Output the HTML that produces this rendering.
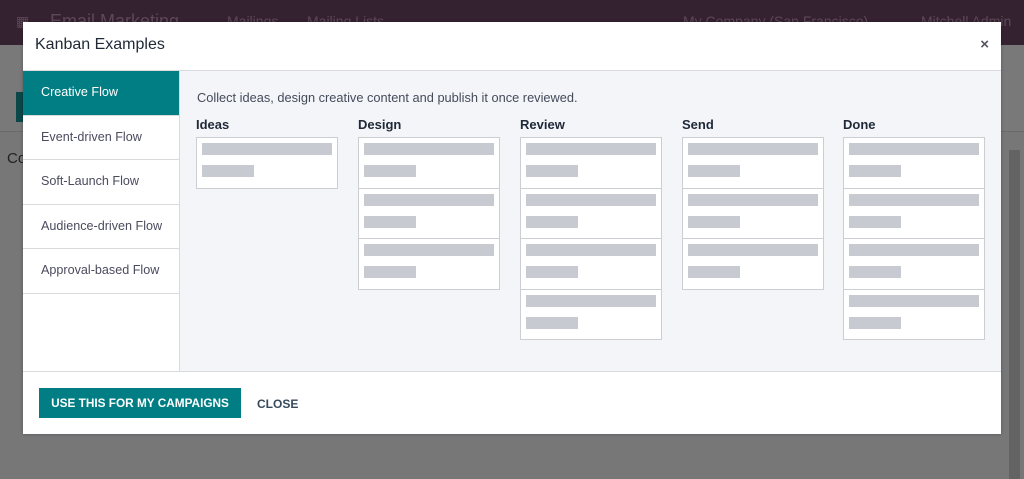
<!DOCTYPE html>
<html><head><style>
*{box-sizing:border-box;margin:0;padding:0}
body{width:1024px;height:479px;overflow:hidden;position:relative;background:#777778;font-family:"Liberation Sans",sans-serif;font-size:13px;color:#374151}
.nav{position:absolute;left:0;top:0;width:1024px;height:45px;background:#352230;color:#5e4858;font-size:14px}
.nav span{position:absolute;top:13px}
.cp{position:absolute;left:0;top:45px;width:1024px;height:87px;background:#79797a;border-bottom:1px solid #6a6a6c}
.sb{position:absolute;left:1009px;top:150px;width:11px;height:329px;background:#636363}
.modal{position:absolute;left:23px;top:22px;width:978px;height:412px;background:#fff;box-shadow:0 0 3px rgba(0,0,0,.3)}
.hdr{height:49px;border-bottom:1px solid #d8dadd;position:relative}
.hdr h4{position:absolute;left:12px;top:14px;font-size:16px;font-weight:normal;color:#1f2937}
.x{position:absolute;right:12px;top:14px;font-size:15px;color:#556;font-weight:bold}
.bd{position:absolute;top:49px;left:0;width:978px;height:301px;border-bottom:1px solid #d8dadd}
.side{position:absolute;left:0;top:0;width:157px;height:300px;border-right:1px solid #d8dadd}
.it{height:44.6px;border-bottom:1px solid #d8dadd;padding:14px 0 0 18px;color:#4b4b5e;font-size:12.6px}
.it.a{background:#017e84;color:#fff}
.main{position:absolute;left:157px;top:0;width:821px;height:300px;background:#f4f5f9}
.desc{position:absolute;left:17px;top:19px;color:#444b5a;font-size:12.8px}
.col{position:absolute;top:46px;width:142px}
.col b{display:block;font-size:13px;color:#1f2937;margin-bottom:6px;height:14px}
.card{height:51.5px;background:#fff;border:1px solid #ccced4;margin-top:-1px;position:relative}
.card:first-of-type{margin-top:0}
.card i{position:absolute;left:5px;top:5px;width:130px;height:12px;background:#c8cad1}
.card i+i{top:27px;width:52px}
.ft{position:absolute;top:350px;left:0;width:978px;height:62px}
.btn{position:absolute;left:16px;top:16px;width:202px;height:30px;background:#017e84;color:#fff;font-weight:bold;font-size:11.8px;text-align:center;line-height:30px;white-space:nowrap}
.cl{position:absolute;left:234px;top:25px;color:#374a5e;font-weight:bold;font-size:12px}
</style></head><body>
<div class="nav"><span style="left:16px">▦</span><span style="left:50px;font-size:18px;top:11px">Email Marketing</span><span style="left:227px">Mailings</span><span style="left:307px">Mailing Lists</span><span style="left:683px">My Company (San Francisco)</span><span style="left:921px">Mitchell Admin</span></div>
<div class="cp"><div style="position:absolute;left:16px;top:47px;width:8px;height:30px;background:#0b4748"></div></div>
<div style="position:absolute;left:7px;top:150px;font-size:15px;color:#222">Co</div>
<div class="sb"></div>
<div class="modal">
<div class="hdr"><h4>Kanban Examples</h4><span class="x">×</span></div>
<div class="bd">
<div class="side">
<div class="it a">Creative Flow</div><div class="it">Event-driven Flow</div><div class="it">Soft-Launch Flow</div><div class="it">Audience-driven Flow</div><div class="it">Approval-based Flow</div>
</div>
<div class="main">
<div class="desc">Collect ideas, design creative content and publish it once reviewed.</div>
<div class="col" style="left:16px"><b>Ideas</b><div class="card"><i></i><i></i></div></div>
<div class="col" style="left:178px"><b>Design</b><div class="card"><i></i><i></i></div><div class="card"><i></i><i></i></div><div class="card"><i></i><i></i></div></div>
<div class="col" style="left:340px"><b>Review</b><div class="card"><i></i><i></i></div><div class="card"><i></i><i></i></div><div class="card"><i></i><i></i></div><div class="card"><i></i><i></i></div></div>
<div class="col" style="left:502px"><b>Send</b><div class="card"><i></i><i></i></div><div class="card"><i></i><i></i></div><div class="card"><i></i><i></i></div></div>
<div class="col" style="left:663px"><b>Done</b><div class="card"><i></i><i></i></div><div class="card"><i></i><i></i></div><div class="card"><i></i><i></i></div><div class="card"><i></i><i></i></div></div>
</div>
</div>
<div class="ft"><div class="btn">USE THIS FOR MY CAMPAIGNS</div><div class="cl">CLOSE</div></div>
</div>
</body></html>
